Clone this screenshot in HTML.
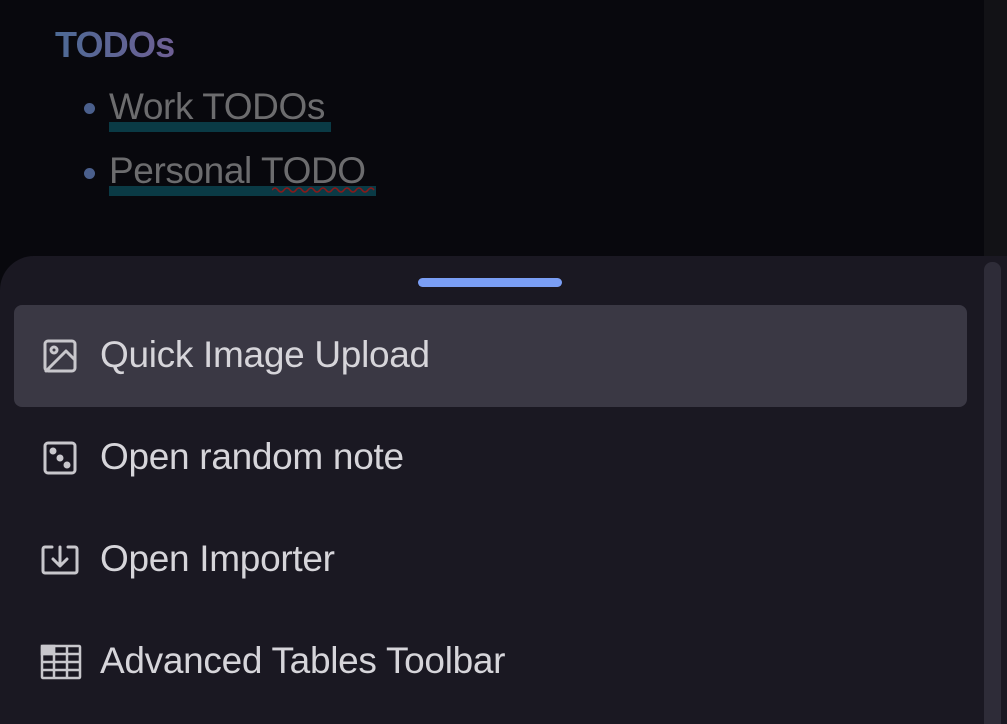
<!DOCTYPE html>
<html><head><meta charset="utf-8"><style>
html,body{margin:0;padding:0;width:1007px;height:724px;overflow:hidden;background:#08080d;font-family:"Liberation Sans",sans-serif;position:relative}
.top{position:absolute;left:0;top:0;width:984px;height:256px;background:#08080d}
.strip{position:absolute;left:984px;top:0;width:23px;height:256px;background:#121216}
.h{position:absolute;left:55px;top:24px;font-size:36px;font-weight:bold;background:linear-gradient(90deg,#4d6a95,#6e5f94);-webkit-background-clip:text;color:transparent;letter-spacing:-0.8px;line-height:42px}
.li{position:absolute;left:109px;font-size:37px;color:#6c6c6e;letter-spacing:-0.4px;line-height:42px;white-space:nowrap}
.ul{position:absolute;left:109px;height:10px;background:#0a3a45}
.dot{position:absolute;left:84px;width:11px;height:11px;border-radius:50%;background:#4a5f8c}
.sheet{position:absolute;left:0;top:256px;width:1007px;height:468px;background:#1a1822;border-radius:34px 0 0 0}
.handle{position:absolute;left:418px;top:278px;width:144px;height:9px;border-radius:5px;background:#7a9ef5}
.sel{position:absolute;left:14px;top:305px;width:953px;height:102px;border-radius:8px;background:#3a3844}
.sb{position:absolute;left:984px;top:262px;width:17px;height:462px;border-radius:8px 8px 0 0;background:#2e2c38}
.row{position:absolute;left:100px;font-size:37px;color:#d6d5da;letter-spacing:-0.3px;line-height:42px;white-space:nowrap}
svg{position:absolute}
</style></head><body>
<div class="top"></div><div class="strip"></div>
<div class="h">TODOs</div>
<div class="ul" style="top:122px;width:222px"></div>
<div class="ul" style="top:186px;width:267px"></div>
<div class="dot" style="top:103px"></div>
<div class="li" style="top:86px">Work TODOs</div>
<div class="dot" style="top:168px"></div>
<div class="li" style="top:150px">Personal TODO</div>
<svg style="left:272px;top:186px" width="104" height="8"><path d="M0 4 q3 -4 6 0 t6 0 t6 0 t6 0 t6 0 t6 0 t6 0 t6 0 t6 0 t6 0 t6 0 t6 0 t6 0 t6 0 t6 0 t6 0 t6 0" stroke="#8a1a1a" stroke-width="1.5" fill="none"/></svg>
<div class="sheet"></div>
<div class="handle"></div>
<div class="sel"></div>
<div class="sb"></div>
<svg style="left:42px;top:338px" width="36" height="36" viewBox="0 0 36 36" fill="none" stroke="#c8c7cc" stroke-width="3" stroke-linecap="round" stroke-linejoin="round"><rect x="3" y="3" width="30" height="30" rx="3"/><circle cx="12" cy="12" r="3"/><path d="M33 22 L24 13 L4 33"/></svg>
<div class="row" style="top:334px">Quick Image Upload</div>
<svg style="left:42px;top:440px" width="36" height="36" viewBox="0 0 36 36" fill="none" stroke="#c8c7cc" stroke-width="3"><rect x="3" y="3" width="30" height="30" rx="3"/><circle cx="11" cy="11" r="2" fill="#c8c7cc"/><circle cx="18" cy="18" r="2" fill="#c8c7cc"/><circle cx="25" cy="25" r="2" fill="#c8c7cc"/></svg>
<div class="row" style="top:436px">Open random note</div>
<svg style="left:40px;top:542px" width="40" height="36" viewBox="0 0 40 36" fill="none" stroke="#c8c7cc" stroke-width="3" stroke-linecap="round" stroke-linejoin="round"><path d="M12 5 H5 a2 2 0 0 0 -2 2 V29 a2 2 0 0 0 2 2 H35 a2 2 0 0 0 2 -2 V7 a2 2 0 0 0 -2 -2 H28"/><path d="M20 5 V23 M13 17 L20 24 L27 17"/></svg>
<div class="row" style="top:538px">Open Importer</div>
<svg style="left:40px;top:644px" width="42" height="36" viewBox="0 0 42 36" fill="none" stroke="#c8c7cc" stroke-width="2.5"><rect x="2" y="2" width="38" height="32" rx="1"/><rect x="2" y="2" width="12" height="8" fill="#c8c7cc"/><path d="M2 10 H40 M2 18 H40 M2 26 H40 M14 2 V34 M27 2 V34"/></svg>
<div class="row" style="top:640px">Advanced Tables Toolbar</div>
</body></html>
